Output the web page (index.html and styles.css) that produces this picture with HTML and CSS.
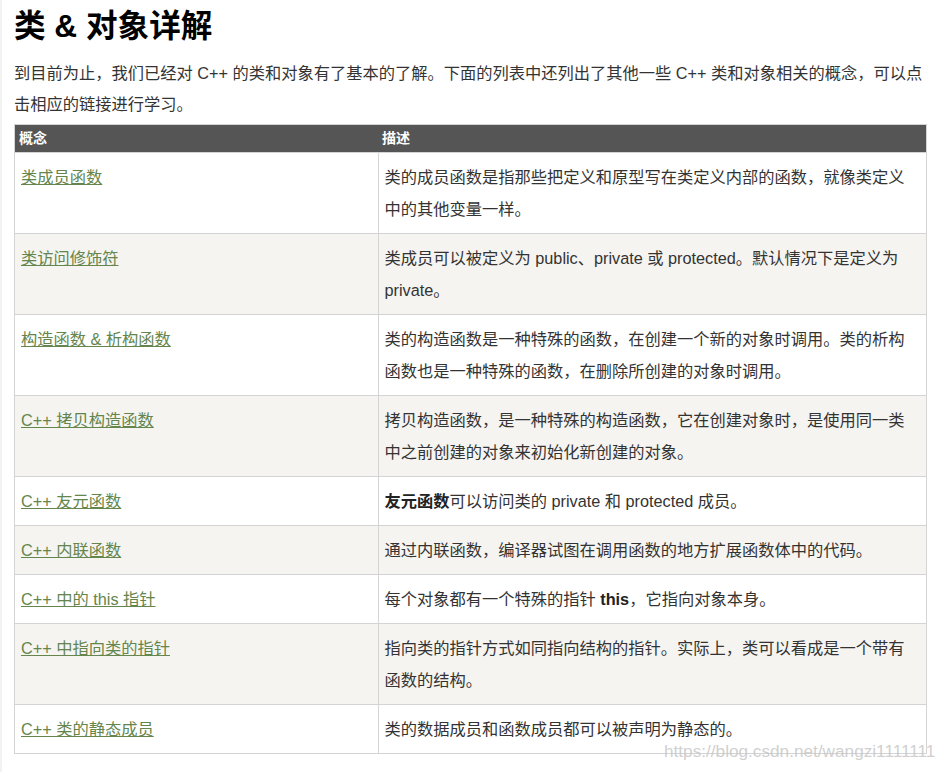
FILE: index.html
```html
<!DOCTYPE html>
<html lang="zh-CN">
<head>
<meta charset="utf-8">
<title>类 &amp; 对象详解</title>
<link rel="stylesheet" href="styles.css">
</head>
<body>
<div class="page">
  <h1 class="title">类 &amp; 对象详解</h1>
  <p class="intro">到目前为止，我们已经对 C++ 的类和对象有了基本的了解。下面的列表中还列出了其他一些 C++ 类和对象相关的概念，可以点击相应的链接进行学习。</p>
  <table class="ref">
    <thead>
      <tr><th class="c1">概念</th><th>描述</th></tr>
    </thead>
    <tbody>
      <tr><td><a href="#">类成员函数</a></td><td>类的成员函数是指那些把定义和原型写在类定义内部的函数，就像类定义中的其他变量一样。</td></tr>
      <tr><td><a href="#">类访问修饰符</a></td><td>类成员可以被定义为 public、private 或 protected。默认情况下是定义为 private。</td></tr>
      <tr><td><a href="#">构造函数 &amp; 析构函数</a></td><td>类的构造函数是一种特殊的函数，在创建一个新的对象时调用。类的析构函数也是一种特殊的函数，在删除所创建的对象时调用。</td></tr>
      <tr><td><a href="#">C++ 拷贝构造函数</a></td><td>拷贝构造函数，是一种特殊的构造函数，它在创建对象时，是使用同一类中之前创建的对象来初始化新创建的对象。</td></tr>
      <tr><td><a href="#">C++ 友元函数</a></td><td><strong>友元函数</strong>可以访问类的 private 和 protected 成员。</td></tr>
      <tr><td><a href="#">C++ 内联函数</a></td><td>通过内联函数，编译器试图在调用函数的地方扩展函数体中的代码。</td></tr>
      <tr><td><a href="#">C++ 中的 this 指针</a></td><td>每个对象都有一个特殊的指针 <strong>this</strong>，它指向对象本身。</td></tr>
      <tr><td><a href="#">C++ 中指向类的指针</a></td><td>指向类的指针方式如同指向结构的指针。实际上，类可以看成是一个带有函数的结构。</td></tr>
      <tr><td><a href="#">C++ 类的静态成员</a></td><td>类的数据成员和函数成员都可以被声明为静态的。</td></tr>
    </tbody>
  </table>
</div>
<div class="watermark">https://blog.csdn.net/wangzi1111111</div>
</body>
</html>
```

FILE: styles.css
```css
html, body {
  margin: 0;
  padding: 0;
  background: #fff;
}
body {
  position: relative;
  width: 936px;
  height: 772px;
  overflow: hidden;
  border-left: 2px solid #f2f2f2;
  box-sizing: border-box;
  font-family: "Liberation Sans", "Noto Sans CJK SC", sans-serif;
  color: #333;
}
.page {
  padding: 6px 0 0 12px;
}
.title {
  margin: 0;
  font-size: 31.6px;
  line-height: 40px;
  font-weight: bold;
  color: #000;
}
.intro {
  margin: 12px 0 4px 0;
  width: 912px;
  font-size: 16.25px;
  line-height: 31px;
}
.ref {
  width: 913px;
  border-collapse: collapse;
  border: 1px solid #d4d4d4;
  font-size: 16.25px;
}
.ref th {
  background: #555;
  color: #fff;
  font-size: 14px;
  font-weight: bold;
  text-align: left;
  height: 27px;
  padding: 0 4px;
  line-height: 27px;
}
.ref th.c1 {
  width: 355px;
}
.ref td {
  border: 1px solid #d4d4d4;
  padding: 8px 6px;
  line-height: 32px;
  vertical-align: top;
}
.ref tbody tr:nth-child(even) td {
  background: #f5f4f1;
}
.ref a {
  color: #64854c;
  text-decoration: underline;
}
.ref strong {
  color: #222;
}
.watermark {
  position: absolute;
  left: 662px;
  top: 741px;
  white-space: nowrap;
  font-family: "Liberation Sans", sans-serif;
  font-size: 17.2px;
  line-height: 20px;
  color: rgba(195, 195, 195, 0.8);
}
```
